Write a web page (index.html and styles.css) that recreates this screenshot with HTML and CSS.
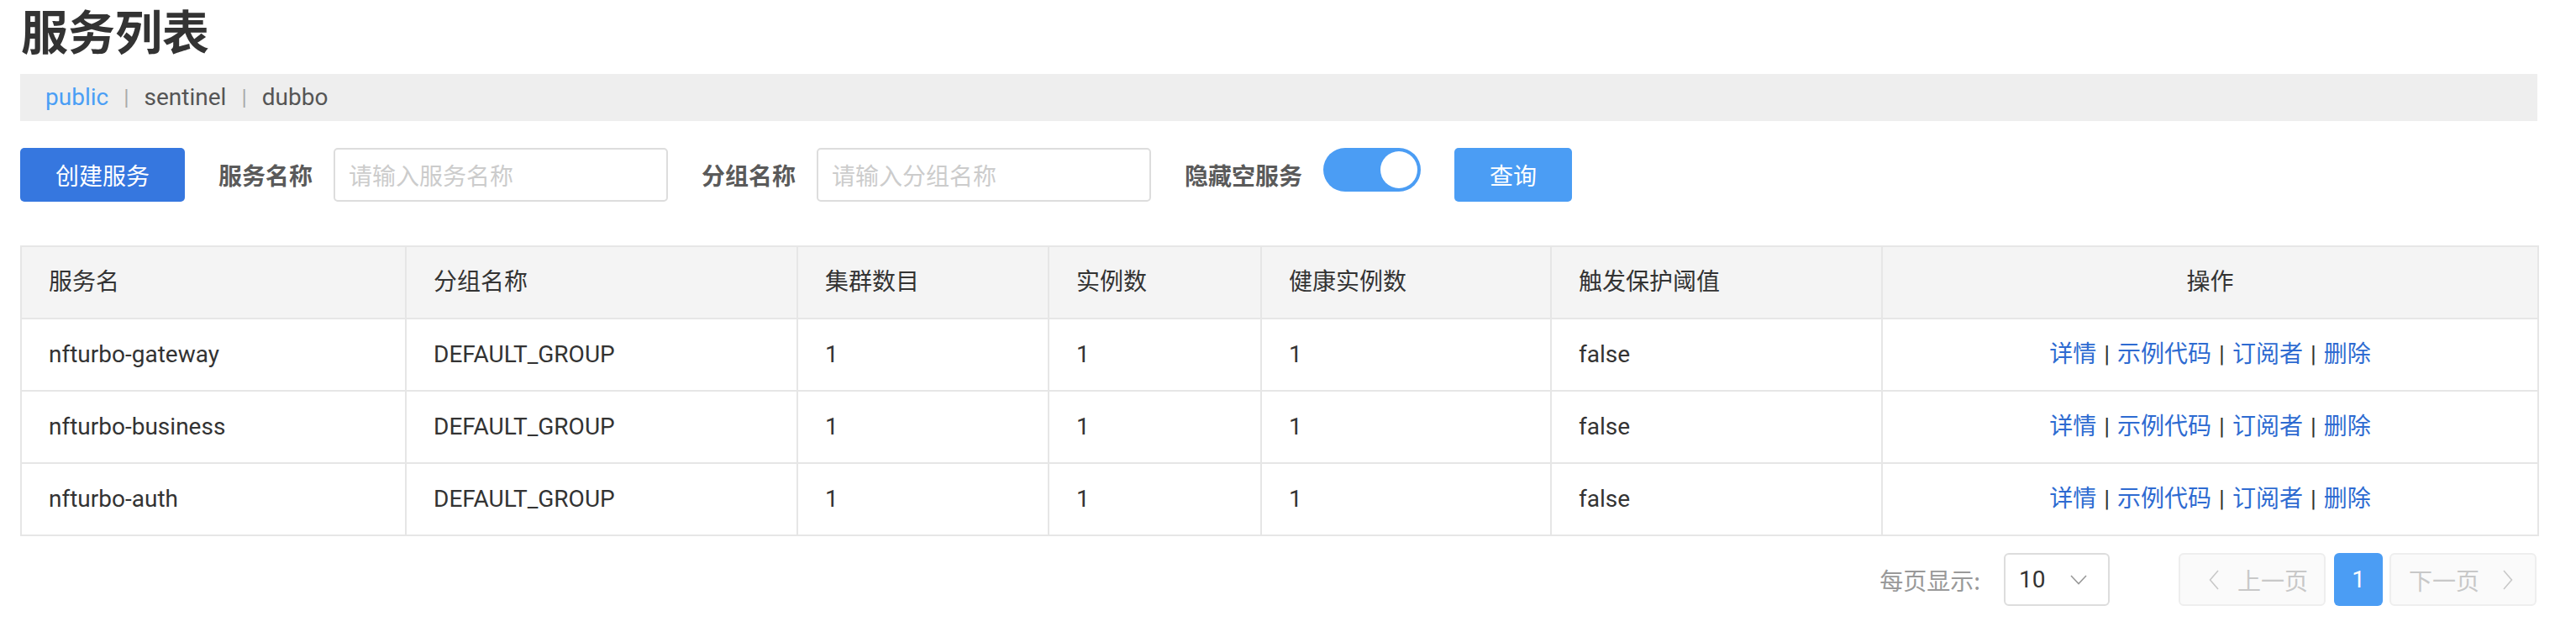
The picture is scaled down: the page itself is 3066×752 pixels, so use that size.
FILE: index.html
```html
<!DOCTYPE html>
<html lang="zh-CN">
<head>
<meta charset="utf-8">
<title>服务列表</title>
<link rel="stylesheet" href="styles.css">
</head>
<body>
<div class="page">
  <h1 class="title">服务列表</h1>

  <div class="ns-bar">
    <a class="ns ns-active">public</a>
    <span class="ns-sep">|</span>
    <a class="ns">sentinel</a>
    <span class="ns-sep">|</span>
    <a class="ns">dubbo</a>
  </div>

  <div class="toolbar">
    <button class="btn btn-create">创建服务</button>
    <span class="field-label">服务名称</span>
    <input class="text-input" type="text" placeholder="请输入服务名称">
    <span class="field-label">分组名称</span>
    <input class="text-input" type="text" placeholder="请输入分组名称">
    <span class="field-label">隐藏空服务</span>
    <span class="switch"><span class="switch-knob"></span></span>
    <button class="btn btn-query">查询</button>
  </div>

  <table class="grid">
    <colgroup>
      <col class="c1"><col class="c2"><col class="c3"><col class="c4"><col class="c5"><col class="c6"><col class="c7">
    </colgroup>
    <thead>
      <tr>
        <th>服务名</th>
        <th>分组名称</th>
        <th>集群数目</th>
        <th>实例数</th>
        <th>健康实例数</th>
        <th>触发保护阈值</th>
        <th class="center">操作</th>
      </tr>
    </thead>
    <tbody>
      <tr>
        <td>nfturbo-gateway</td>
        <td>DEFAULT_GROUP</td>
        <td>1</td>
        <td>1</td>
        <td>1</td>
        <td>false</td>
        <td class="center"><a class="op">详情</a><span class="op-sep">|</span><a class="op">示例代码</a><span class="op-sep">|</span><a class="op">订阅者</a><span class="op-sep">|</span><a class="op">删除</a></td>
      </tr>
      <tr>
        <td>nfturbo-business</td>
        <td>DEFAULT_GROUP</td>
        <td>1</td>
        <td>1</td>
        <td>1</td>
        <td>false</td>
        <td class="center"><a class="op">详情</a><span class="op-sep">|</span><a class="op">示例代码</a><span class="op-sep">|</span><a class="op">订阅者</a><span class="op-sep">|</span><a class="op">删除</a></td>
      </tr>
      <tr>
        <td>nfturbo-auth</td>
        <td>DEFAULT_GROUP</td>
        <td>1</td>
        <td>1</td>
        <td>1</td>
        <td>false</td>
        <td class="center"><a class="op">详情</a><span class="op-sep">|</span><a class="op">示例代码</a><span class="op-sep">|</span><a class="op">订阅者</a><span class="op-sep">|</span><a class="op">删除</a></td>
      </tr>
    </tbody>
  </table>

  <div class="pager">
    <span class="pager-label">每页显示:</span>
    <div class="page-size">
      <span class="page-size-value">10</span>
      <svg class="page-size-arrow" width="20" height="12" viewBox="0 0 20 12"><polyline points="1,1 10,10.5 19,1" fill="none" stroke="#999" stroke-width="1.6"/></svg>
    </div>
    <button class="pg-btn pg-prev" disabled>
      <svg class="pg-chev" width="12" height="24" viewBox="0 0 12 24"><polyline points="11,1 1.5,12 11,23" fill="none" stroke="#c8c8c8" stroke-width="1.6"/></svg>
      <span>上一页</span>
    </button>
    <button class="pg-btn pg-current">1</button>
    <button class="pg-btn pg-next" disabled>
      <span>下一页</span>
      <svg class="pg-chev" width="12" height="24" viewBox="0 0 12 24"><polyline points="1,1 10.5,12 1,23" fill="none" stroke="#c8c8c8" stroke-width="1.6"/></svg>
    </button>
  </div>
</div>
</body>
</html>
```

FILE: styles.css
```css
html, body {
  margin: 0;
  padding: 0;
  background: #fff;
}

body {
  font-family: Roboto, "Noto Sans CJK SC", "Noto Sans", sans-serif;
  font-size: 28px;
  color: #333;
}

.page {
  width: 2996px;
  margin-left: 24px;
}

.title {
  margin: 7px 0 25px 1px;
  font-size: 56px;
  line-height: 56px;
  font-weight: 700;
  color: #333;
  font-family: "Noto Sans CJK SC", sans-serif;
}

.ns-bar {
  height: 56px;
  background: #eeeeee;
  display: flex;
  align-items: center;
  padding-left: 30px;
  line-height: 56px;
}

.ns {
  color: #555;
  font-size: 28px;
}

.ns-active {
  color: #4a9ef5;
}

.ns-sep {
  color: #aaa;
  margin: 0 18px;
  font-size: 26px;
}

.toolbar {
  margin-top: 32px;
  display: flex;
  align-items: center;
  height: 64px;
}

.btn {
  height: 64px;
  border: none;
  border-radius: 5px;
  color: #fff;
  font-family: "Noto Sans CJK SC", sans-serif;
  font-size: 28px;
  padding: 0;
  cursor: pointer;
}

.btn-create {
  width: 196px;
  background: #3677df;
}

.btn-query {
  width: 140px;
  margin-left: 40px;
  background: #4b9df4;
}

.field-label {
  margin: 0 25px 0 40px;
  font-family: "Noto Sans CJK SC", sans-serif;
  font-weight: 700;
  color: #5a5a5a;
  font-size: 28px;
  white-space: nowrap;
}

.text-input {
  box-sizing: border-box;
  width: 398px;
  height: 64px;
  border: 2px solid #dddddd;
  border-radius: 5px;
  padding: 0 16px;
  font-family: "Noto Sans CJK SC", sans-serif;
  font-size: 28px;
  color: #333;
  outline: none;
  margin: 0;
}

.text-input::placeholder {
  color: #cccccc;
}

.switch {
  align-self: flex-start;
  position: relative;
  display: block;
  width: 116px;
  height: 52px;
  border-radius: 26px;
  background: #4b9df4;
}

.switch-knob {
  position: absolute;
  top: 4px;
  right: 4px;
  width: 44px;
  height: 44px;
  border-radius: 50%;
  background: #fff;
}

.grid {
  margin-top: 52px;
  width: 2996px;
  table-layout: fixed;
  border-collapse: separate;
  border-spacing: 0;
  border-top: 2px solid #e6e6e6;
  border-left: 2px solid #e6e6e6;
}

.c1 { width: 458px; }
.c2 { width: 466px; }
.c3 { width: 299px; }
.c4 { width: 253px; }
.c5 { width: 345px; }
.c6 { width: 394px; }
.c7 { width: 781px; }

.grid th,
.grid td {
  padding: 0 0 0 32px;
  line-height: 84px;
  border-right: 2px solid #e6e6e6;
  border-bottom: 2px solid #e6e6e6;
  text-align: left;
  font-weight: 400;
  font-size: 28px;
  color: #333;
  white-space: nowrap;
  overflow: hidden;
}

.grid th {
  background: #f4f4f4;
}

.grid .center {
  text-align: center;
  padding: 0;
}

.op {
  color: #2e6bd1;
}

.op-sep {
  color: #333;
  margin: 0 9px;
}

.pager {
  margin-top: 20px;
  display: flex;
  justify-content: flex-end;
  align-items: center;
  padding-right: 1px;
}

.pager-label {
  color: #999;
  font-family: "Noto Sans CJK SC", sans-serif;
  font-size: 28px;
}

.page-size {
  box-sizing: border-box;
  margin-left: 28px;
  width: 126px;
  height: 63px;
  border: 2px solid #dddddd;
  border-radius: 6px;
  display: flex;
  align-items: center;
  justify-content: space-between;
  padding: 0 25px 0 16px;
}

.page-size-value {
  color: #333;
  font-size: 28px;
}

.pg-btn {
  box-sizing: border-box;
  height: 63px;
  border-radius: 6px;
  font-family: "Noto Sans CJK SC", sans-serif;
  font-size: 28px;
  display: flex;
  align-items: center;
  padding: 0;
  margin: 0;
}

.pg-prev,
.pg-next {
  width: 175px;
  border: 2px solid #eeeeee;
  background: #fafafa;
  color: #c8c8c8;
}

.pg-prev {
  margin-left: 82px;
  padding-left: 34px;
  gap: 22px;
}

.pg-current {
  margin-left: 10px;
  width: 58px;
  justify-content: center;
  border: none;
  background: #4b9df4;
  color: #fff;
  font-family: Roboto, sans-serif;
}

.pg-next {
  margin-left: 8px;
  padding-left: 21px;
  gap: 28px;
}
```
